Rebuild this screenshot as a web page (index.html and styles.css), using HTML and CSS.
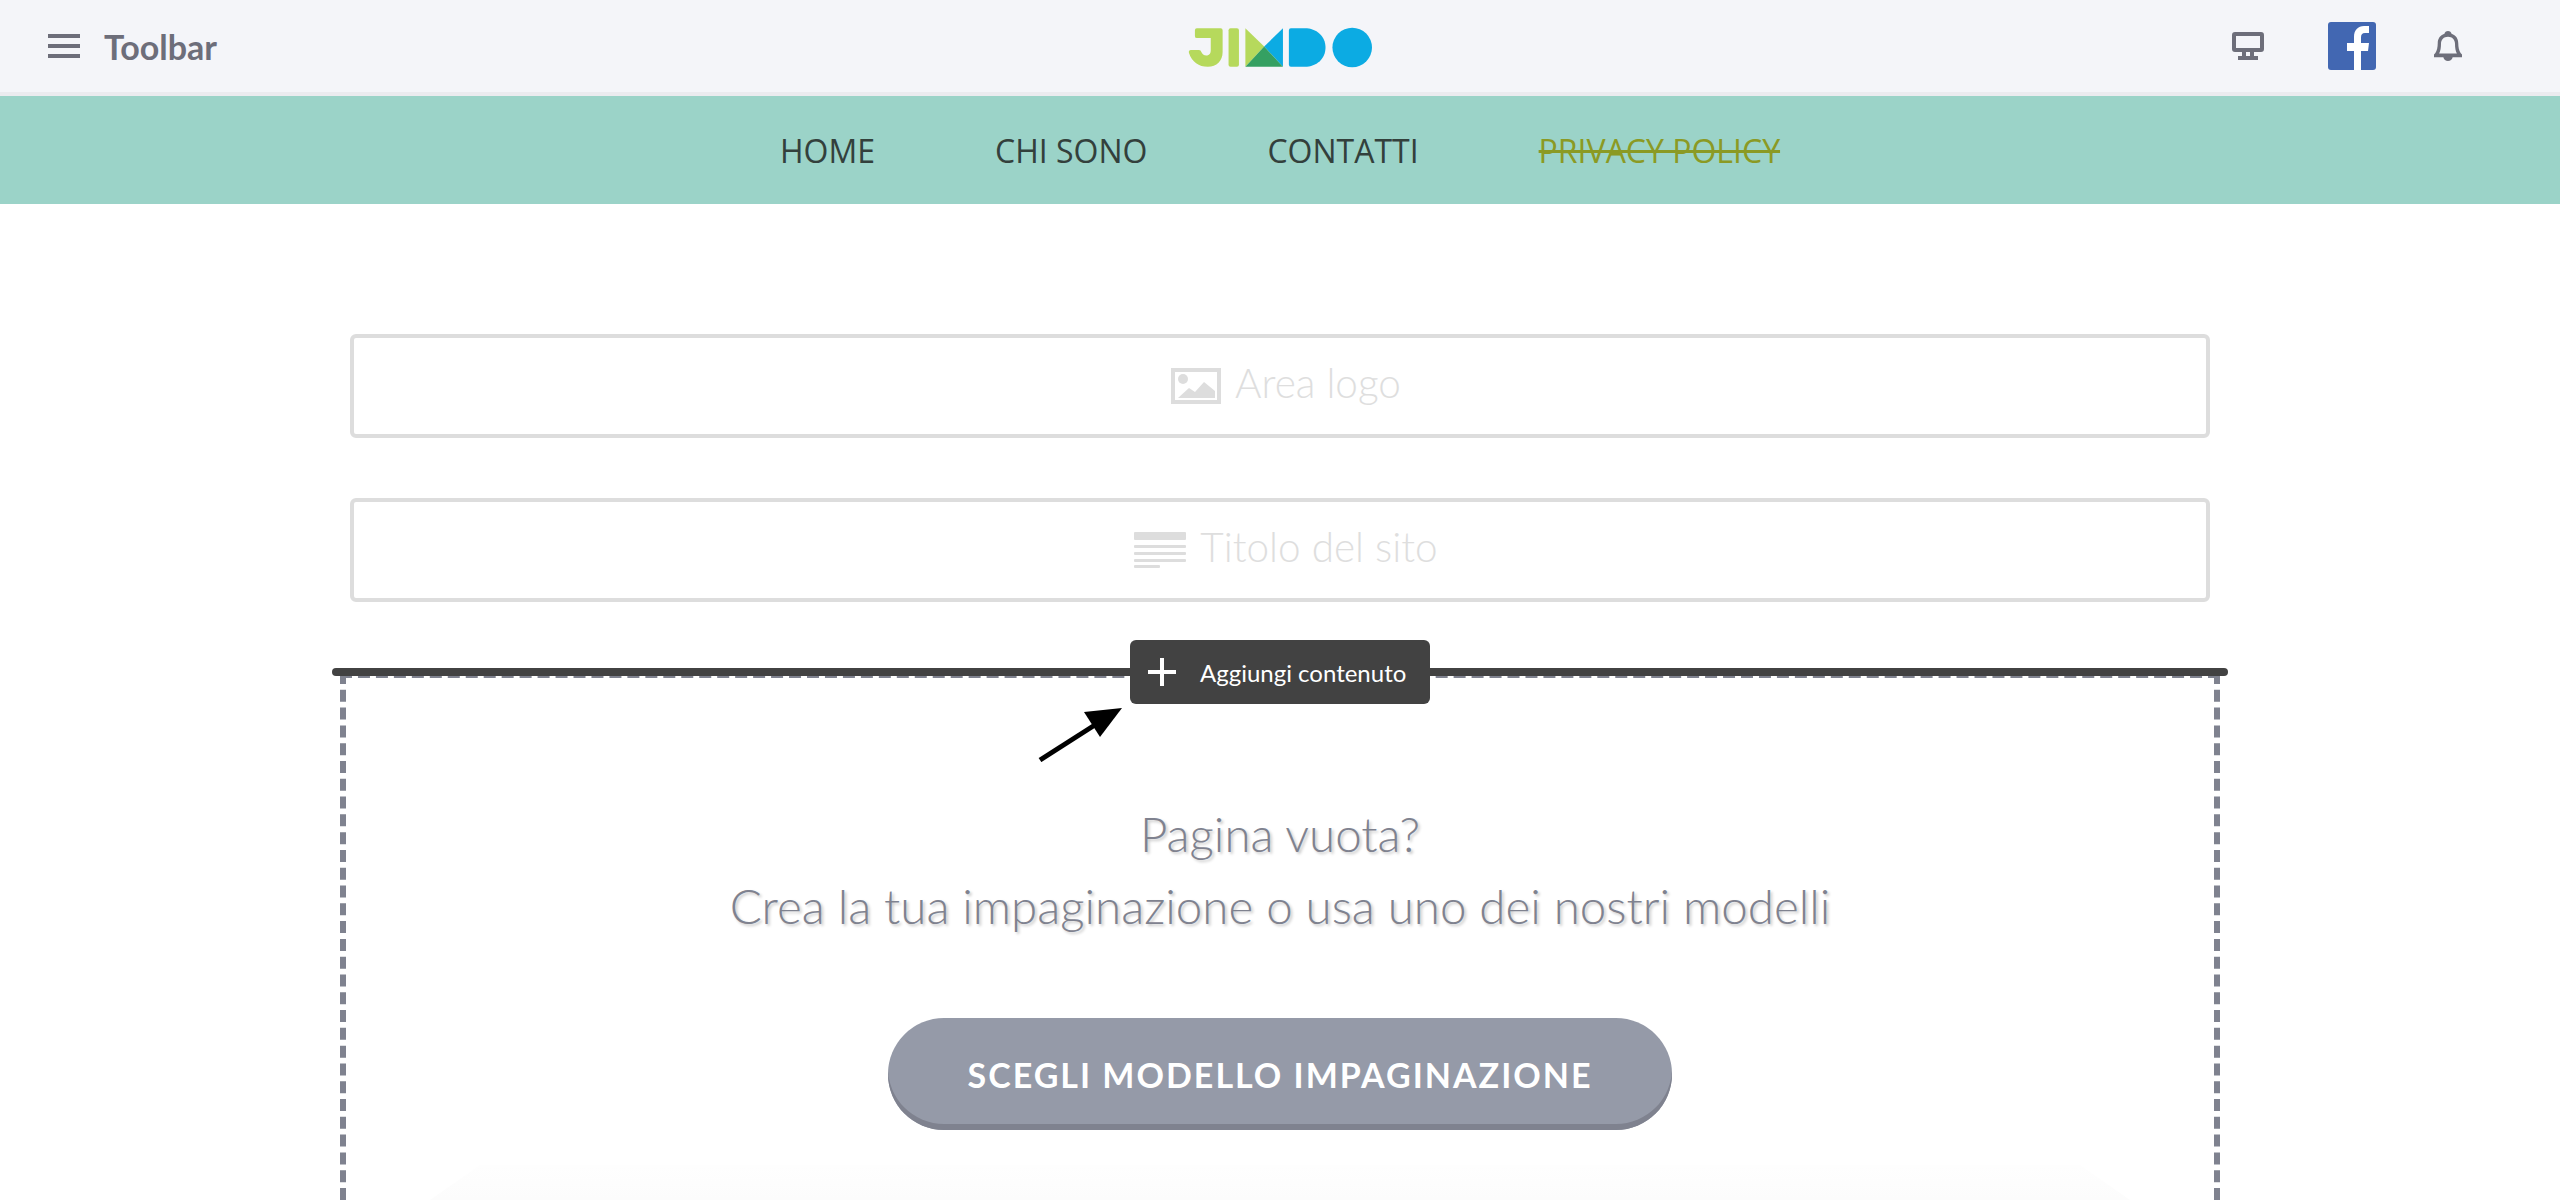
FILE: index.html
```html
<!DOCTYPE html>
<html lang="it">
<head>
<meta charset="utf-8">
<title>Jimdo</title>
<link rel="stylesheet" href="styles.css">
</head>
<body>
<header class="toolbar">
  <div class="toolbar-left">
    <svg class="burger" width="32" height="24" viewBox="0 0 32 24"><path d="M0 0h32v4H0zM0 10h32v4H0zM0 20h32v4H0z" fill="#6d6e7a"/></svg>
    <span class="toolbar-label">Toolbar</span>
  </div>
  <svg class="logo" width="184" height="42" viewBox="0 0 186 42">
    <path d="M9 1h24a2 2 0 0 1 2 2v22c0 9-6 15-15 15S4 35 1 26c-.6-2 .4-3 2-3h8c1.500 0 2 .8 2.500 2 .8 2 3 4 6 3.500 2.500-.4 3.500-2.500 3.500-5V11H9a2 2 0 0 1-2-2V3a2 2 0 0 1 2-2z" fill="#b6d95c"/>
    <rect x="41" y="1" width="10.500" height="39" rx="2" fill="#b6d95c"/>
    <path d="M58 1v39L77 19.500z" fill="#b6d95c"/>
    <path d="M96 1v39L77 19.500z" fill="#0cabe3"/>
    <path d="M58 40h38L77 19.500z" fill="#35a062"/>
    <path d="M104 1h14c12 0 21 8 21 19.500S130 40 118 40h-14a2 2 0 0 1-2-2V3a2 2 0 0 1 2-2z" fill="#0cabe3"/>
    <circle cx="166" cy="20.500" r="20" fill="#0cabe3"/>
  </svg>
  <div class="toolbar-right">
    <svg class="icon-monitor" width="32" height="28" viewBox="0 0 32 28"><path d="M3 0h26a3 3 0 0 1 3 3v14a3 3 0 0 1-3 3h-7v4h4v4H6v-4h4v-4H3a3 3 0 0 1-3-3V3a3 3 0 0 1 3-3zm1 4v12h24V4zm10 16v4h4v-4z" fill="#6d6e7a" fill-rule="evenodd"/></svg>
    <svg class="icon-fb" width="48" height="48" viewBox="0 0 48 48"><rect width="48" height="48" rx="3" fill="#4267b2"/><path d="M26 48V29h-7v-8h7v-6c0-7 4-11 10-11h5v7h-4c-3 0-4 1.500-4 4.500V21h8l-1 8h-7v19z" fill="#fff"/></svg>
    <svg class="icon-bell" width="28" height="32" viewBox="0 0 30 32"><path d="M15 0c2 0 3.500 1.200 3.800 3C23.500 4.500 26 8.500 26 13c0 4 .8 8 2.500 10.500L30 25v3H20c-.5 2.300-2.500 4-5 4s-4.500-1.700-5-4H0v-3l1.500-1.500C3.200 21 4 17 4 13c0-4.500 2.500-8.500 7.200-10C11.500 1.200 13 0 15 0zm0 6c-4.500 0-7.500 3-7.500 7.500 0 4-.6 8-2 10.500h19c-1.400-2.500-2-6.500-2-10.500C22.500 9 19.500 6 15 6z" fill="#6d6e7a" fill-rule="evenodd"/></svg>
  </div>
</header>

<nav class="nav">
  <a class="nav-item">HOME</a>
  <a class="nav-item">CHI SONO</a>
  <a class="nav-item">CONTATTI</a>
  <a class="nav-item nav-struck">PRIVACY POLICY</a>
</nav>

<main class="page">
  <div class="slot">
    <svg width="50" height="36" viewBox="0 0 50 36"><path d="M0 0h50v36H0zm4 4v28h42V4z" fill="#ddd" fill-rule="evenodd"/><circle cx="12" cy="11" r="5" fill="#ddd"/><path d="M7 30l11-10 6 4 9-10 11 9v7z" fill="#ddd"/></svg>
    <span class="slot-text">Area logo</span>
  </div>
  <div class="slot">
    <svg width="52" height="36" viewBox="0 0 52 36"><rect width="52" height="8" rx="1" fill="#ddd"/><rect y="13" width="52" height="3" rx="1" fill="#ddd"/><rect y="20" width="52" height="3" rx="1" fill="#ddd"/><rect y="27" width="52" height="3" rx="1" fill="#ddd"/><rect y="33" width="26" height="3" rx="1" fill="#ddd"/></svg>
    <span class="slot-text">Titolo del sito</span>
  </div>

  <section class="content">
    <div class="add-line"></div>
    <div class="add-button">
      <svg width="28" height="28" viewBox="0 0 28 28"><path d="M12 0h4v12h12v4H16v12h-4V16H0v-4h12z" fill="#fff"/></svg>
      <span class="add-label">Aggiungi contenuto</span>
    </div>
    <svg class="arrow" width="86" height="56" viewBox="0 0 86 56"><path d="M2 54L60 17" stroke="#000" stroke-width="5" fill="none"/><path d="M84 2L46 6l16 25z" fill="#000"/></svg>
    <p class="empty-text">Pagina vuota?<br>Crea la tua impaginazione o usa uno dei nostri modelli</p>
    <button class="pill">SCEGLI MODELLO IMPAGINAZIONE</button>
    <div class="ghost"></div>
  </section>
</main>
</body>
</html>
```
FILE: styles.css
```css
* { box-sizing: border-box; }
html, body { margin: 0; height: 1200px; overflow: hidden; background: #fff; }
body { font-family: "Lato", "Liberation Sans", sans-serif; }

.toolbar {
  height: 96px;
  background: #f4f5f9;
  border-bottom: 4px solid #ebebef;
  position: relative;
  display: flex;
  align-items: center;
  justify-content: space-between;
  padding: 0 98px 0 48px;
}
.toolbar-left { display: flex; align-items: center; gap: 24px; }
.burger { display: block; }
.toolbar-label { font-size: 34px; font-weight: 700; color: #6d6e7a; }
.logo { position: absolute; left: 1188px; top: 27px; }
.toolbar-right { display: flex; align-items: center; gap: 58px; }
.toolbar-right svg { display: block; }
.toolbar-right .icon-monitor { margin-right: 6px; }

.nav {
  height: 108px;
  background: #9bd3c8;
  display: flex;
  align-items: center;
  justify-content: center;
  gap: 120px;
  font-family: "Open Sans", "Noto Sans", sans-serif;
  font-size: 32px;
  color: #33403c;
}
.nav-struck { color: #8b9a24; text-decoration: line-through; }

.page { width: 1860px; height: 866px; margin: 130px auto 0; }
.slot {
  height: 104px;
  margin-bottom: 60px;
  padding-left: 12px;
  border: 4px solid #ddd;
  border-radius: 6px;
  display: flex;
  align-items: center;
  justify-content: center;
  gap: 14px;
}
.slot-text { font-size: 40.5px; font-weight: 300; color: #dedede; margin-bottom: 8px; }

.content {
  position: relative;
  width: 1880px;
  margin: 70px 0 0 -10px;
  height: 528px;
  border: 6px dashed #7f828f;
  border-bottom: 0;
  text-align: center;
}
.add-line {
  position: absolute;
  left: -14px;
  right: -14px;
  top: -10px;
  height: 8px;
  border-radius: 4px;
  background: #424242;
}
.add-button {
  position: absolute;
  left: 784px;
  top: -38px;
  width: 300px;
  height: 64px;
  border-radius: 6px;
  background: #424242;
  display: flex;
  align-items: center;
  gap: 24px;
  padding-left: 18px;
}
.add-button svg { display: block; }
.add-label { font-size: 24px; color: #fff; }
.arrow { position: absolute; left: 692px; top: 28px; }

.empty-text {
  margin: 0;
  padding-top: 120px;
  font-size: 47.5px;
  line-height: 72px;
  font-weight: 300;
  color: #7f828f;
  text-shadow: 2px 2px 3px rgba(0, 0, 0, .22);
}
.pill {
  display: block;
  width: 784px;
  height: 112px;
  margin: 76px auto 0;
  border: 0;
  border-radius: 56px;
  background: #959aa8;
  box-shadow: inset 0 -6px 0 #7f828f;
  font-family: inherit;
  font-size: 34px;
  font-weight: 700;
  letter-spacing: 2px;
  color: #fff;
}
.ghost {
  height: 35px;
  margin: 35px 84px 0;
  background: linear-gradient(#fefefe, #fcfcfc);
  clip-path: polygon(50px 0, calc(100% - 50px) 0, 100% 100%, 0 100%);
}
```
